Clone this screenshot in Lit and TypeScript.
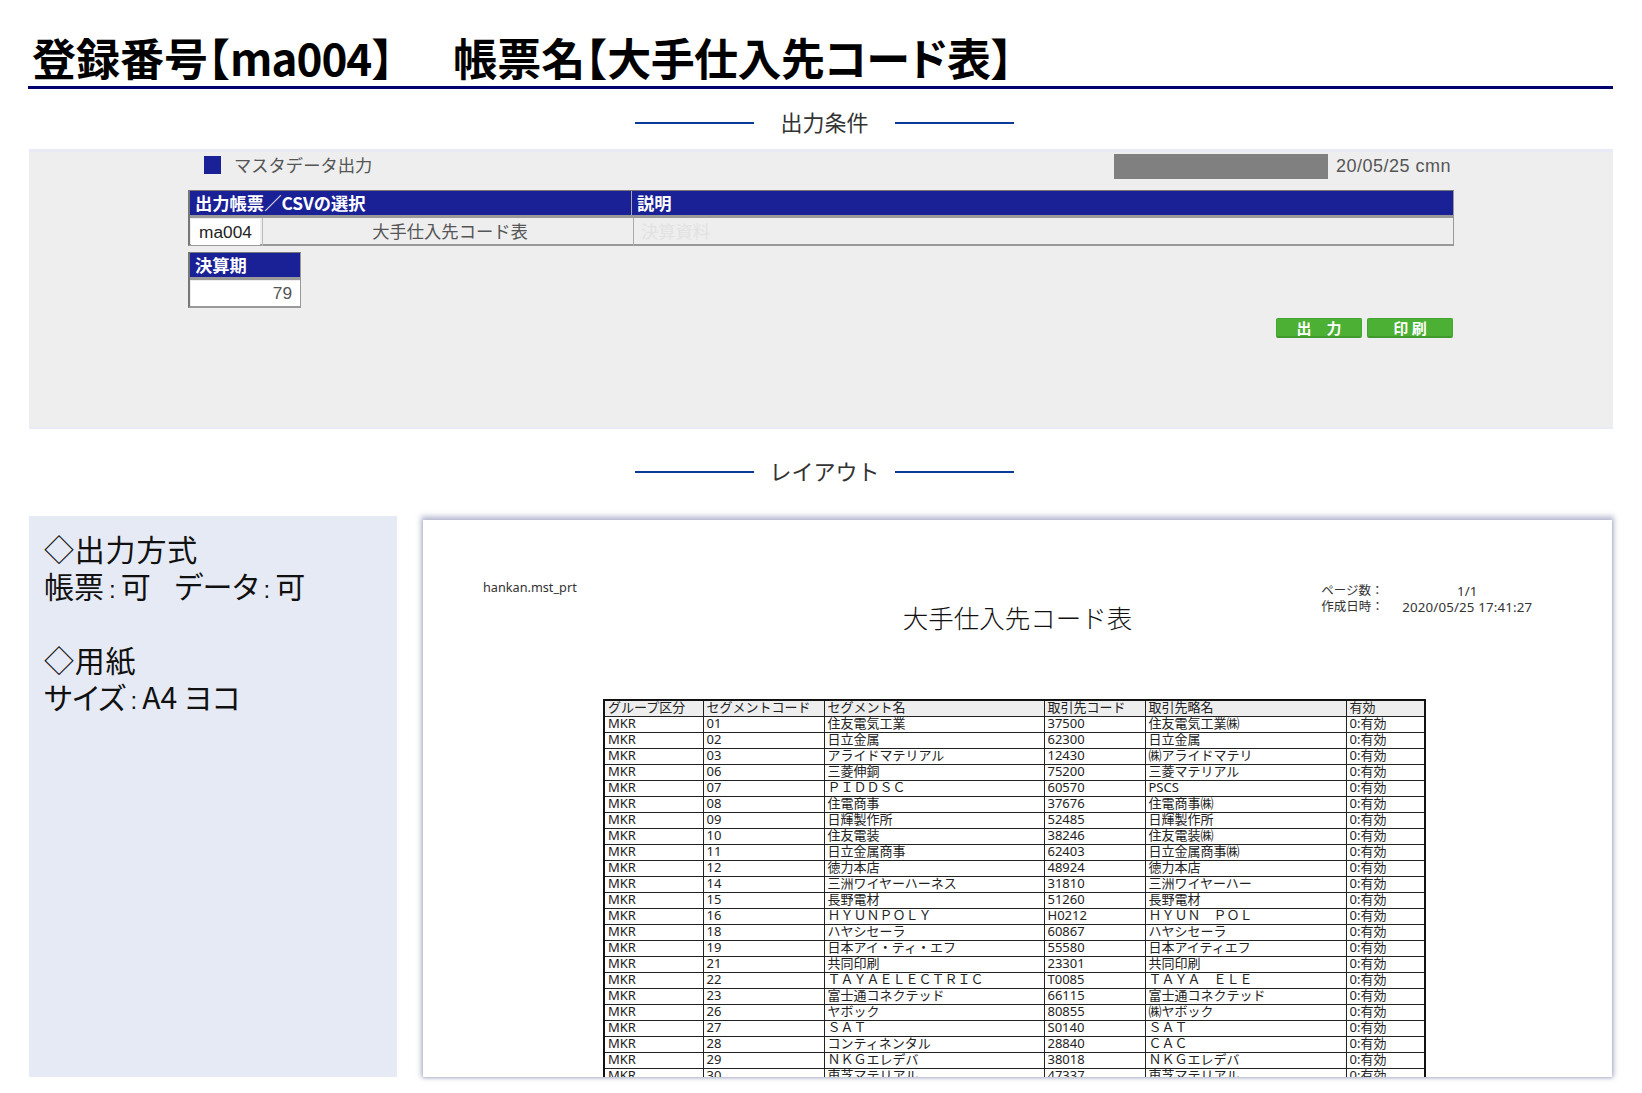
import { LitElement, html, css } from "lit";
import { customElement } from "lit/decorators.js";

const rows: string[][] = [
  ["01", "住友電気工業", "37500", "住友電気工業㈱"],
  ["02", "日立金属", "62300", "日立金属"],
  ["03", "アライドマテリアル", "12430", "㈱アライドマテリ"],
  ["06", "三菱伸銅", "75200", "三菱マテリアル"],
  ["07", "ＰＩＤＤＳＣ", "60570", "PSCS"],
  ["08", "住電商事", "37676", "住電商事㈱"],
  ["09", "日輝製作所", "52485", "日輝製作所"],
  ["10", "住友電装", "38246", "住友電装㈱"],
  ["11", "日立金属商事", "62403", "日立金属商事㈱"],
  ["12", "徳力本店", "48924", "徳力本店"],
  ["14", "三洲ワイヤーハーネス", "31810", "三洲ワイヤーハー"],
  ["15", "長野電材", "51260", "長野電材"],
  ["16", "ＨＹＵＮＰＯＬＹ", "H0212", "ＨＹＵＮ　ＰＯＬ"],
  ["18", "ハヤシセーラ", "60867", "ハヤシセーラ"],
  ["19", "日本アイ・ティ・エフ", "55580", "日本アイティエフ"],
  ["21", "共同印刷", "23301", "共同印刷"],
  ["22", "ＴＡＹＡＥＬＥＣＴＲＩＣ", "T0085", "ＴＡＹＡ　ＥＬＥ"],
  ["23", "富士通コネクテッド", "66115", "富士通コネクテッド"],
  ["26", "ヤボック", "80855", "㈱ヤボック"],
  ["27", "ＳＡＴ", "S0140", "ＳＡＴ"],
  ["28", "コンティネンタル", "28840", "ＣＡＣ"],
  ["29", "ＮＫＧエレデバ", "38018", "ＮＫＧエレデバ"],
  ["30", "東芝マテリアル", "47337", "東芝マテリアル"],
];

const heads = ["グループ区分", "セグメントコード", "セグメント名", "取引先コード", "取引先略名", "有効"];

@customElement("app-root")
export class AppRoot extends LitElement {
  static styles = css`
    :host {
      display: block;
      width: 1642px;
      height: 1093px;
      overflow: hidden;
      background: #fff;
      box-sizing: border-box;
      padding: 0 29px 0 28px;
      font-family: "Noto Sans CJK JP", sans-serif;
      color: #222;
    }
    h1 {
      margin: 0;
      height: 86px;
      box-sizing: content-box;
      border-bottom: 3px solid #00006e;
      padding-left: 4px;
      display: flex;
      align-items: flex-end;
      gap: 60px;
      font-size: 44px;
      line-height: 56px;
      font-weight: 700;
      color: #000;
      white-space: nowrap;
    }
    h1 > span { display: block; padding-bottom: 1px; }
    .br { font-feature-settings: "halt"; }
    .lat { letter-spacing: -1px; }
    .pt { font-feature-settings: "palt"; letter-spacing: -0.6px; }
    .sec {
      display: flex;
      justify-content: center;
      align-items: center;
      height: 32px;
      padding-left: 8px;
      font-size: 22px;
      line-height: 32px;
      color: #333;
    }
    .sec i { display: block; width: 119px; height: 2px; background: #0a3a9a; }
    .sec b { display: block; width: 141px; height: 32px; text-align: center; font-weight: 400; margin-top: -4px; }
    .s1 { margin: 18px 0 10px; }
    .s2 { margin: 27px 0 28px; }
    .panel {
      box-sizing: border-box;
      margin-left: 1px;
      height: 280px;
      background: #eeeeee;
      border-top: 3px solid #e8ebf5;
      border-bottom: 2px solid #e8ebf5;
      padding: 2px 159px 0 159px;
      font-size: 17.3px;
      color: #555;
    }
    .top { display: flex; align-items: center; height: 25px; padding: 0 3px 0 16px; }
    .sq { width: 17px; height: 18px; background: #1a2196; margin: -3px 13px 0 0; }
    .top .lbl { flex: 1; margin-top: -5px; }
    .redact { width: 214px; height: 25px; background: #808080; margin-right: 8px; }
    .stamp { font: 18px/25px "Liberation Sans", sans-serif; letter-spacing: 0.5px; margin-top: -1px; }
    .tbl {
      border-top: 1px solid #777;
      border-left: 2px solid #777;
      border-right: 1px solid #999;
      border-bottom: 2px solid #999;
      box-sizing: border-box;
      line-height: 24px;
    }
    .t1 { margin-top: 11px; height: 56px; }
    .t2 { margin-top: 6px; height: 56px; width: 113px; }
    .hd {
      display: grid;
      height: 24px;
      background: #1a2196;
      border-bottom: 3px solid #999;
      color: #fff;
      font-weight: 700;
      box-sizing: content-box;
    }
    .t1 .hd { grid-template-columns: 441px 1fr; }
    .hd span { padding-left: 5px; white-space: nowrap; }
    .hd span + span { border-left: 1px solid #aaa; }
    .rw { display: flex; height: 28px; line-height: 26px; }
    .code {
      width: 69px; margin: 1px 0 0 1px; height: 26px;
      background: #fff; color: #222; text-align: center;
      font-family: "Liberation Sans", "Noto Sans CJK JP", sans-serif;
    }
    .name { width: 366px; padding-left: 4px; margin-left: 2px; text-align: center; border-left: 1px solid #bbb; }
    .desc { flex: 1; border-left: 1px solid #aaa; padding-left: 7px; color: #e2e2e2; }
    .num {
      margin: 1px 0 0 1px;
      height: 25px;
      line-height: 25px;
      background: #fff;
      text-align: right;
      padding-right: 8px;
      font-family: "Liberation Sans", sans-serif;
    }
    .btns { display: flex; justify-content: flex-end; gap: 5px; margin: 10px 1px 0 0; }
    .btn {
      width: 86px;
      height: 20px;
      box-sizing: border-box;
      background: #4cb034;
      border: 1px solid #46a530;
      border-bottom: 2px solid #3f9a2b;
      border-radius: 2px;
      color: #fff;
      font-size: 15px;
      font-weight: 700;
      line-height: 17px;
      text-align: center;
      white-space: pre;
    }
    .bottom {
      display: grid;
      grid-template-columns: 368px 1fr;
      gap: 26px;
      margin-left: 1px;
      height: 561px;
    }
    .info {
      background: #e6eaf5;
      padding: 14px 15px;
      font-size: 30px;
      line-height: 37px;
      color: #111;
      white-space: pre;
      font-feature-settings: "palt";
    }
    .h { letter-spacing: 0.8px; }
    .c { font-size: 24px; line-height: 1; padding: 0 5px; font-family: "Liberation Sans", sans-serif; }
    .sp { display: inline-block; width: 24px; }
    .page {
      margin: 4px 1px 0 0;
      height: 557px;
      background: #fff;
      overflow: hidden;
      box-shadow: 0 -2px 5px 2px rgba(125, 132, 170, 0.5), 0 1px 3px rgba(125, 132, 170, 0.45);
      color: #333;
    }
    .rhead { display: grid; grid-template-columns: 1fr auto 1fr; align-items: start; height: 117px; }
    .file { margin: 58px 0 0 60px; font: 12.7px/18px "Noto Sans", sans-serif; }
    .rtitle { margin-top: 79px; font-size: 25.5px; line-height: 36px; font-weight: 300; color: #111; }
    .meta {
      margin: 63px 0 0 189px;
      display: grid;
      grid-template-columns: 81px 130px;
      font: 12.5px/16px "Noto Sans", "Noto Sans CJK JP", sans-serif;
      white-space: nowrap;
    }
    .meta .v { text-align: center; font-size: 13.3px; letter-spacing: 0.15px; }
    table {
      margin: 62px 0 0 180px;
      width: 821px;
      table-layout: fixed;
      border-collapse: collapse;
      border: 2px solid #111;
      font: 13px/12px "Noto Sans", "Noto Sans CJK JP", sans-serif;
    }
    th, td {
      height: 15px;
      padding: 0 0 0 3px;
      border: 1px solid #222;
      text-align: left;
      vertical-align: top;
      font-weight: 400;
      white-space: nowrap;
      color: #222;
    }
    th { background: #eee; }
  `;

  render() {
    return html`
      <h1>
        <span>登録番号<span class="br">【</span><span class="lat">ma004</span><span class="br">】</span></span>
        <span>帳票名<span class="br">【</span><span class="pt">大手仕入先コード表</span><span class="br">】</span></span>
      </h1>
      <div class="sec s1"><i></i><b>出力条件</b><i></i></div>
      <div class="panel">
        <div class="top">
          <div class="sq"></div>
          <div class="lbl">マスタデータ出力</div>
          <div class="redact"></div>
          <div class="stamp">20/05/25 cmn</div>
        </div>
        <div class="tbl t1">
          <div class="hd"><span>出力帳票／CSVの選択</span><span>説明</span></div>
          <div class="rw">
            <div class="code">ma004</div>
            <div class="name">大手仕入先コード表</div>
            <div class="desc">決算資料</div>
          </div>
        </div>
        <div class="tbl t2">
          <div class="hd"><span>決算期</span></div>
          <div class="num">79</div>
        </div>
        <div class="btns">
          <div class="btn">出　力</div>
          <div class="btn">印 刷</div>
        </div>
      </div>
      <div class="sec s2"><i></i><b>レイアウト</b><i></i></div>
      <div class="bottom">
        <div class="info"><span class="h">◇出力方式</span>
帳票<span class="c">:</span>可<span class="sp"></span>データ<span class="c">:</span>可

<span class="h">◇用紙</span>
サイズ<span class="c">:</span>A4 ヨコ</div>
        <div class="page">
          <div class="rhead">
            <div class="file">hankan.mst_prt</div>
            <div class="rtitle">大手仕入先コード表</div>
            <div class="meta">
              <span>ページ数：</span><span class="v">1/1</span>
              <span>作成日時：</span><span class="v">2020/05/25 17:41:27</span>
            </div>
          </div>
          <table>
            <colgroup>
              <col style="width:99px" /><col style="width:121px" /><col style="width:220px" />
              <col style="width:101px" /><col style="width:201px" /><col style="width:79px" />
            </colgroup>
            <thead><tr>${heads.map((h) => html`<th>${h}</th>`)}</tr></thead>
            <tbody>
              ${rows.map(
                (r) => html`<tr><td>MKR</td><td>${r[0]}</td><td>${r[1]}</td><td>${r[2]}</td><td>${r[3]}</td><td>0:有効</td></tr>`
              )}
            </tbody>
          </table>
        </div>
      </div>
    `;
  }
}
